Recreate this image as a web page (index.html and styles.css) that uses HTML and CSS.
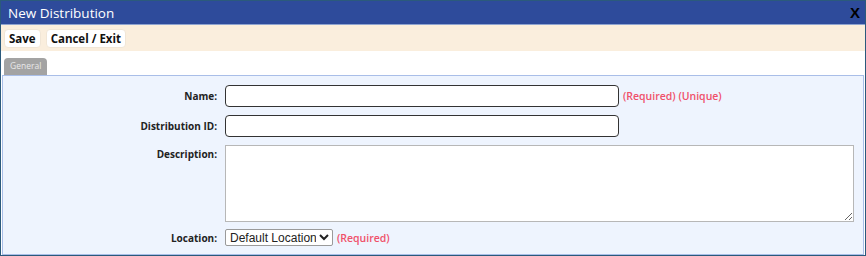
FILE: index.html
```html
<!DOCTYPE html>
<html lang="en">
<head>
    <meta charset="UTF-8">
    <title>New Distribution</title>
    <link rel="stylesheet" href="styles.css">
</head>
<body>
    <div class="dialog">
        <div class="titlebar">
            <span class="title">New Distribution</span>
            <span class="close">X</span>
        </div>
        <div class="toolbar">
            <button class="tool-btn">Save</button>
            <button class="tool-btn">Cancel / Exit</button>
        </div>
        <div class="tabs">
            <div class="tab">General</div>
        </div>
        <div class="panel">
            <div class="row">
                <label class="label">Name:</label>
                <input type="text" class="text-input">
                <span class="req">(Required) (Unique)</span>
            </div>
            <div class="row">
                <label class="label">Distribution ID:</label>
                <input type="text" class="text-input">
            </div>
            <div class="row row-top">
                <label class="label">Description:</label>
                <textarea class="desc"></textarea>
            </div>
            <div class="row">
                <label class="label">Location:</label>
                <select class="loc">
                    <option>Default Location</option>
                </select>
                <span class="req">(Required)</span>
            </div>
        </div>
    </div>
</body>
</html>
```

FILE: styles.css
```css
body {
    margin: 0;
    padding: 0;
    font-family: "Open Sans", "Noto Sans", sans-serif;
    background: #ffffff;
}
.dialog {
    width: 864px;
    height: 254px;
    border: 1px solid #2b5a7c;
    display: flex;
    flex-direction: column;
}
.titlebar {
    height: 23px;
    background-color: #2e4b9b;
    border-bottom: 1px solid #8ea3cf;
    display: flex;
    justify-content: space-between;
    align-items: center;
    padding: 0 5px 0 7px;
}
.title {
    color: #ffffff;
    font-size: 13.5px;
}
.close {
    color: #000000;
    font-weight: bold;
    font-size: 15px;
    font-family: "Liberation Sans", Arial, sans-serif;
}
.toolbar {
    height: 26px;
    background-color: #faeedd;
    display: flex;
    align-items: center;
    gap: 5px;
    padding: 0 3px;
}
.tool-btn {
    background: #ffffff;
    border: 1px solid #f1e6d6;
    border-radius: 4px;
    height: 19px;
    padding: 0 4px;
    font-family: "Open Sans", "Noto Sans", sans-serif;
    font-size: 11.5px;
    font-weight: bold;
    color: #111111;
}
.tabs {
    height: 24px;
    display: flex;
    align-items: flex-end;
    padding-left: 3px;
}
.tab {
    background: #a3a3a3;
    color: #e8e8e8;
    font-size: 8.5px;
    padding: 2px 6px 3px;
    border-radius: 4px 4px 0 0;
    height: 12px;
}
.panel {
    flex: 1;
    margin: 0 1px 0 1px;
    border: 1px solid #a9bee8;
    background-color: #eef4fe;
    padding-top: 9px;
}
.row {
    display: flex;
    align-items: center;
    margin-bottom: 8px;
}
.row-top {
    align-items: flex-start;
    margin-bottom: 7px;
}
.label {
    width: 214px;
    text-align: right;
    padding-right: 8px;
    font-size: 10px;
    font-weight: bold;
    color: #222222;
}
.row-top .label {
    padding-top: 2px;
}
.text-input {
    width: 394px;
    height: 22px;
    border: 1.5px solid #333333;
    border-radius: 4px;
    background: #ffffff;
    padding: 0 2px;
    margin: 0;
    box-sizing: border-box;
}
.desc {
    width: 629px;
    height: 77px;
    border: 1px solid #b7b7b7;
    background: #ffffff;
    margin: 0;
    padding: 2px;
    box-sizing: border-box;
}
.loc {
    width: 108px;
    height: 17px;
    font-family: "Liberation Sans", Arial, sans-serif;
    font-size: 12px;
    border: 1px solid #9a9a9a;
    border-radius: 2px;
    background: #ffffff;
    color: #222222;
    margin: 0;
    padding: 0;
}
.req {
    color: #f0506a;
    font-size: 10.5px;
    font-weight: 600;
    margin-left: 4px;
}
```
